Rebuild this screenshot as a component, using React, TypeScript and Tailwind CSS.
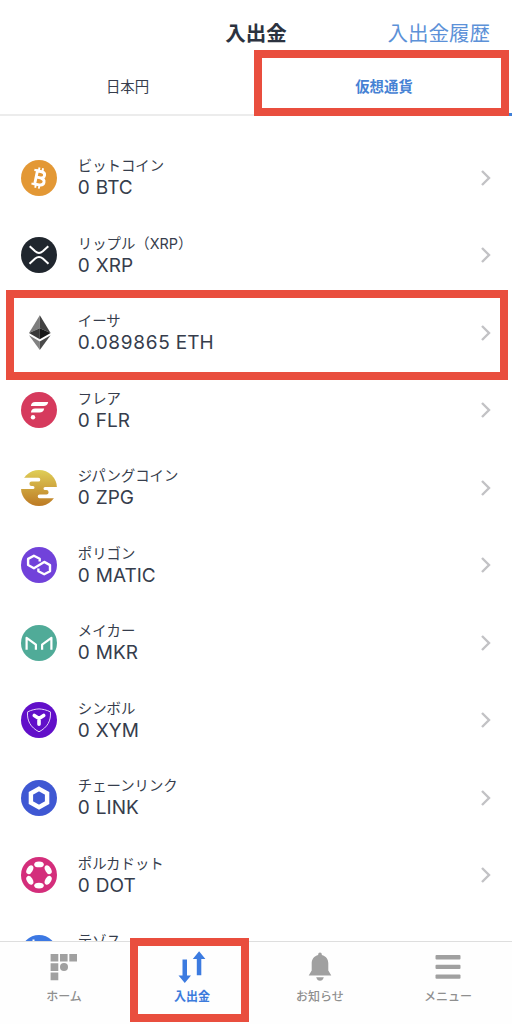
import type { ReactNode } from 'react'

const BitcoinIcon = () => (
  <svg viewBox="0 0 36 36" className="w-9 h-9">
    <circle cx="18" cy="18" r="18" fill="#e39835" />
    <g transform="rotate(12 18 18)" fill="none" stroke="#fff" strokeWidth="2.9">
      <path d="M13.6 11.3H19.3C24.1 11.3 24.1 17.6 19.3 17.6H14.6M19.3 17.8C25.3 17.8 25.3 24.7 19.3 24.7H13.6M15 11.3V24.7" />
      <path strokeWidth="1.9" d="M16.3 7.6V11M20 7.6V11M16.3 25V28.4M20 25V28.4" />
      <path strokeWidth="2.1" d="M11.8 11H15M11.8 25H15" />
    </g>
  </svg>
)

const XrpIcon = () => (
  <svg viewBox="0 0 36 36" className="w-9 h-9">
    <circle cx="18" cy="18" r="18" fill="#20262e" />
    <g fill="none" stroke="#fff" strokeWidth="2">
      <path d="M8.7 9.2L14.2 14.3Q18 17.6 21.8 14.3L27.3 9.2" />
      <path d="M8.5 26.8L14.2 21.6Q18 18.3 21.8 21.6L27.5 26.8" />
    </g>
  </svg>
)

const EtherIcon = () => (
  <svg viewBox="0 0 36 36" className="w-9 h-9">
    <path d="M18.8 .3L8 18L18.8 13.2Z" fill="#7d7d7d" />
    <path d="M18.8 .3L29.6 18L18.8 13.2Z" fill="#424242" />
    <path d="M8 18L18.8 13.2V24.2Z" fill="#3a3a3a" />
    <path d="M29.6 18L18.8 13.2V24.2Z" fill="#161616" />
    <path d="M8 20.2L18.8 26.4V35.1Z" fill="#828282" />
    <path d="M29.6 20.2L18.8 26.4V35.1Z" fill="#4a4a4a" />
  </svg>
)

const FlareIcon = () => (
  <svg viewBox="0 0 36 36" className="w-9 h-9">
    <circle cx="18" cy="18" r="18" fill="#d63a5d" />
    <g fill="#fff">
      <path d="M14 9.9H27.2C26.9 12.6 25 14 22.6 14H9.9C10.1 11.4 11.7 9.9 14 9.9Z" />
      <path d="M14 16.5H23.2C22.9 19.2 21 20.6 18.6 20.6H9.9C10.1 18 11.7 16.5 14 16.5Z" />
      <circle cx="12" cy="25.2" r="2.2" />
    </g>
  </svg>
)

const ZipangIcon = () => (
  <svg viewBox="0 0 36 36" className="w-9 h-9">
    <defs>
      <linearGradient id="zpg" x1="0" y1="0" x2="0" y2="1">
        <stop offset="0" stopColor="#dfce57" />
        <stop offset="1" stopColor="#bd7a24" />
      </linearGradient>
    </defs>
    <circle cx="18" cy="18" r="18" fill="url(#zpg)" />
    <g fill="#fff">
      <path d="M-1 7.8H17.4A1.9 1.9 0 0 1 17.4 11.6H10.6A2.2 2.2 0 0 0 10.6 16H12A1.5 1.5 0 0 1 12 19H-1Z" />
      <path d="M37 28.2H18.6A1.9 1.9 0 0 1 18.6 24.4H25.4A2.2 2.2 0 0 0 25.4 20H24A1.5 1.5 0 0 1 24 17H37Z" />
    </g>
  </svg>
)

const PolygonIcon = () => (
  <svg viewBox="0 0 36 36" className="w-9 h-9">
    <circle cx="18" cy="18" r="18" fill="#7142da" />
    <path
      d="M18.7 14.4V11.8L12.9 8.7L7.1 11.9V18L12.9 21.2L23.2 14.9L29 18.1V24.2L23.2 27.3L17.4 24.2V21.6"
      fill="none"
      stroke="#fff"
      strokeWidth="2.4"
      strokeLinejoin="round"
    />
  </svg>
)

const MakerIcon = () => (
  <svg viewBox="0 0 36 36" className="w-9 h-9">
    <circle cx="18" cy="18" r="18" fill="#50ab98" />
    <g fill="none" stroke="#fff" strokeWidth="2.2" strokeLinejoin="round">
      <path d="M5.6 24.7V12.8L14.9 19.6V24.7" />
      <path d="M30.4 24.7V12.8L21.1 19.6V24.7" />
    </g>
  </svg>
)

const SymbolIcon = () => (
  <svg viewBox="0 0 36 36" className="w-9 h-9">
    <circle cx="18" cy="18" r="18" fill="#620fc9" />
    <path d="M18 6.9C21.5 7 26 8.1 29.4 9.9C30.2 18.6 26.5 25.4 18 29.8C9.5 25.4 5.8 18.6 6.6 9.9C10 8.1 14.5 7 18 6.9Z" fill="none" stroke="#e6d5f8" strokeWidth="1" />
    <path d="M13.3 13.5L18 16.5L22.7 13.5M18 16.5V22.2" fill="none" stroke="#fff" strokeWidth="3.6" strokeLinecap="round" strokeLinejoin="round" />
  </svg>
)

const ChainlinkIcon = () => (
  <svg viewBox="0 0 36 36" className="w-9 h-9">
    <circle cx="18" cy="18" r="18" fill="#3f58d3" />
    <path d="M18 8.8L26.1 13.4V22.6L18 27.2L9.9 22.6V13.4Z" fill="none" stroke="#fff" strokeWidth="4.4" />
  </svg>
)

const PolkadotIcon = () => (
  <svg viewBox="0 0 36 36" className="w-9 h-9">
    <circle cx="18" cy="18" r="18" fill="#d42e7b" />
    {[0, 60, 120, 180, 240, 300].map((angle) => (
      <ellipse key={angle} cx="18" cy="7.4" rx="4.8" ry="2.9" fill="#fff" transform={`rotate(${angle} 18 18)`} />
    ))}
  </svg>
)

const TezosIcon = () => (
  <svg viewBox="0 0 36 36" className="w-9 h-9">
    <circle cx="18" cy="18" r="18" fill="#3c78e3" />
    <path d="M12.5 4.5V17.5Q12.5 22 18 22M9 9H24L17 15C25 15 25 27 17 27" fill="none" stroke="#fff" strokeWidth="2" />
  </svg>
)

interface Coin {
  name: string
  amount: string
  unit: string
  icon: ReactNode
  highlighted?: boolean
}

const coins: Coin[] = [
  { name: 'ビットコイン', amount: '0', unit: 'BTC', icon: <BitcoinIcon /> },
  { name: 'リップル（XRP）', amount: '0', unit: 'XRP', icon: <XrpIcon /> },
  { name: 'イーサ', amount: '0.089865', unit: 'ETH', icon: <EtherIcon />, highlighted: true },
  { name: 'フレア', amount: '0', unit: 'FLR', icon: <FlareIcon /> },
  { name: 'ジパングコイン', amount: '0', unit: 'ZPG', icon: <ZipangIcon /> },
  { name: 'ポリゴン', amount: '0', unit: 'MATIC', icon: <PolygonIcon /> },
  { name: 'メイカー', amount: '0', unit: 'MKR', icon: <MakerIcon /> },
  { name: 'シンボル', amount: '0', unit: 'XYM', icon: <SymbolIcon /> },
  { name: 'チェーンリンク', amount: '0', unit: 'LINK', icon: <ChainlinkIcon /> },
  { name: 'ポルカドット', amount: '0', unit: 'DOT', icon: <PolkadotIcon /> },
  { name: 'テゾス', amount: '0', unit: 'XTZ', icon: <TezosIcon /> },
]

function CoinRow({ name, amount, unit, icon, highlighted }: Coin) {
  return (
    <li className="relative flex h-[77.5px] shrink-0 items-center pl-[20.75px] pr-5">
      {icon}
      <div className="ml-[21px] flex-1 pb-px">
        <p className="text-[14.4px] leading-[22px] whitespace-nowrap">{name}</p>
        <p className="text-[19px] leading-[22px]">
          <span className="tracking-[0.7px]">{amount}</span> {unit}
        </p>
      </div>
      <svg viewBox="0 0 12 18" className="h-[18px] w-3" fill="none" stroke="#c2c2c5" strokeWidth="2.4">
        <path d="M2 2L9 9L2 16" />
      </svg>
      {highlighted && (
        <div className="absolute left-1.5 right-1 -top-[3.75px] h-[90px] border-8 border-[#e94e3e]" />
      )}
    </li>
  )
}

export default function App() {
  return (
    <div className="flex h-[1024px] w-[512px] flex-col overflow-hidden bg-white text-[#363d4c] font-['Inter','Noto_Sans_CJK_JP',sans-serif]">
      {/* Header */}
      <header className="grid h-[60px] shrink-0 grid-cols-3 items-center pt-2">
        <h1 className="col-start-2 text-center text-[20.5px] font-bold leading-7 text-[#2c3340]">入出金</h1>
        <a className="pr-[22px] text-right text-[20.5px] leading-7 text-[#5c91d8]">入出金履歴</a>
      </header>

      {/* Currency tabs */}
      <div className="grid h-14 shrink-0 grid-cols-2 border-b-2 border-[#ececec] text-[14.4px]">
        <div className="flex items-center justify-center pr-px">日本円</div>
        <div className="relative -mb-0.5 flex items-center justify-center border-b-[3px] border-[#3f7fd8] font-bold text-[#4682d4]">
          仮想通貨
          <div className="absolute -left-0.5 -top-2.5 h-[66px] w-[255px] border-8 border-[#e94e3e]" />
        </div>
      </div>

      {/* Coin list */}
      <ul className="flex min-h-0 flex-1 flex-col overflow-hidden pt-[22.75px]">
        {coins.map((coin) => (
          <CoinRow key={coin.name} {...coin} />
        ))}
      </ul>

      {/* Bottom navigation */}
      <nav className="grid h-[83px] shrink-0 grid-cols-4 border-t border-[#dedede] bg-[#fefefe] text-xs font-medium text-[#8f8f8f]">
        <div className="flex flex-col items-center pt-[9px]">
          <svg viewBox="0 0 32 32" className="h-8 w-8" fill="#a0a0a0">
            <path d="M2.6 3H10.3V10.5H2.6ZM12 3H19.6V10.5H12ZM21.3 3H29V10.5H21.3ZM2.6 12.2H10.3V19.9H2.6ZM2.6 21.5H10.3V29.2H2.6Z" />
            <circle cx="16" cy="16" r="4" />
          </svg>
          <span className="mt-[5px] leading-[18px]">ホーム</span>
        </div>
        <div className="relative flex flex-col items-center pt-[9px] font-bold text-[#3c7bdc]">
          <svg viewBox="0 0 32 32" className="h-8 w-8" fill="#3c7be0">
            <path d="M6.5 8.4H11V24.5H15L8.8 32L2.5 24.5H6.5ZM20.8 24.3H25.3V8H29.4L23.1 .3L16.8 8H20.8Z" />
          </svg>
          <span className="mt-[5px] leading-[18px]">入出金</span>
          <div className="absolute left-0.5 -top-1 h-[84px] w-[119px] border-8 border-[#e94e3e]" />
        </div>
        <div className="flex flex-col items-center pt-[9px]">
          <svg viewBox="0 0 32 32" className="h-8 w-8" fill="#a0a0a0">
            <path d="M14.2 4V3.3Q14.2 1.6 16 1.6T17.8 3.3V4C22 5 24.3 8.3 24.3 12.5V19.5L27.3 24.6H4.7L7.7 19.5V12.5C7.7 8.3 10 5 14.2 4Z" />
            <path d="M12.2 26.3H19.8Q18.8 29.8 16 29.8T12.2 26.3Z" />
          </svg>
          <span className="mt-[5px] leading-[18px]">お知らせ</span>
        </div>
        <div className="flex flex-col items-center pt-[9px]">
          <svg viewBox="0 0 32 32" className="h-8 w-8" fill="#a0a0a0">
            <rect x="3.5" y="4" width="25" height="4.4" rx="1" />
            <rect x="3.5" y="13.7" width="25" height="4.4" rx="1" />
            <rect x="3.5" y="23.4" width="25" height="4.4" rx="1" />
          </svg>
          <span className="mt-[5px] leading-[18px]">メニュー</span>
        </div>
      </nav>
    </div>
  )
}
